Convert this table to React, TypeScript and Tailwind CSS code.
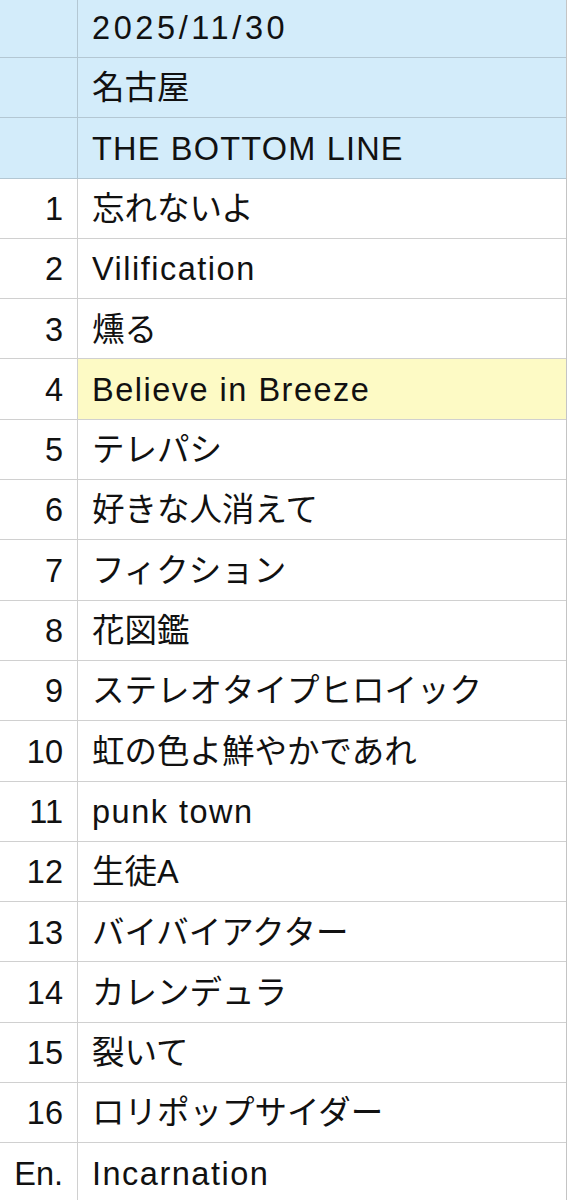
const HEADER = [
  { text: "2025/11/30", cls: "tracking-[3.6px]" },
  { text: "名古屋", cls: "" },
  { text: "THE BOTTOM LINE", cls: "tracking-[1.2px]" },
];

const SONGS: { no: string; title: string; highlight?: boolean }[] = [
  { no: "1", title: "忘れないよ" },
  { no: "2", title: "Vilification" },
  { no: "3", title: "燻る" },
  { no: "4", title: "Believe in Breeze", highlight: true },
  { no: "5", title: "テレパシ" },
  { no: "6", title: "好きな人消えて" },
  { no: "7", title: "フィクション" },
  { no: "8", title: "花図鑑" },
  { no: "9", title: "ステレオタイプヒロイック" },
  { no: "10", title: "虹の色よ鮮やかであれ" },
  { no: "11", title: "punk town" },
  { no: "12", title: "生徒A" },
  { no: "13", title: "バイバイアクター" },
  { no: "14", title: "カレンデュラ" },
  { no: "15", title: "裂いて" },
  { no: "16", title: "ロリポップサイダー" },
  { no: "En.", title: "Incarnation" },
];

const isLatin = (s: string) => /^[\x00-\x7F]+$/.test(s);

export default function App() {
  return (
    <div className="w-[568px] h-[1200px] overflow-hidden bg-white">
      <div
        className="w-[567px] -mt-[2.3px] border-r border-[#c4c4c4] text-[32.5px] text-[#111] leading-none"
        style={{ fontFamily: '"Liberation Sans", "Noto Sans CJK JP", sans-serif' }}
      >
        {/* header rows */}
        {HEADER.map((h) => (
          <div key={h.text} className="flex h-[60.3px] bg-[#d3ecfa] border-b border-[#b3c7d3]">
            <div className="w-[78px] shrink-0 border-r border-[#b3c7d3]" />
            <div className={`flex-1 flex items-center pl-[14px] pt-[2px] ${h.cls}`}>{h.text}</div>
          </div>
        ))}

        {/* setlist */}
        {SONGS.map((s) => (
          <div key={s.no} className="flex h-[60.3px] border-b border-[#d0d0d0]">
            <div className="w-[78px] shrink-0 flex items-center justify-end pr-[14px] pt-[2px] border-r border-[#d0d0d0]">
              {s.no}
            </div>
            <div
              className={`flex-1 flex items-center pl-[14px] pt-[2px] ${
                s.highlight ? "bg-[#fdfac5]" : ""
              } ${isLatin(s.title) ? "tracking-[1.5px]" : ""}`}
            >
              {s.title}
            </div>
          </div>
        ))}
      </div>
    </div>
  );
}
